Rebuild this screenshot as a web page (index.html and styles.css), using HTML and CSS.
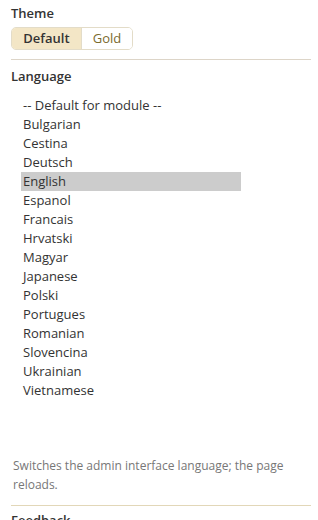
FILE: index.html
```html
<!DOCTYPE html>
<html lang="en">
<head>
    <meta charset="UTF-8">
    <meta name="viewport" content="width=device-width, initial-scale=1.0">
    <title>Settings</title>
    <link rel="stylesheet" href="styles.css">
</head>
<body>
    <div class="field">
        <div class="label">Theme</div>
        <div class="segmented">
            <button class="seg active">Default</button>
            <button class="seg">Gold</button>
        </div>
    </div>

    <div class="field field-top">
        <div class="label">Language</div>
        <div class="listbox" role="listbox">
            <div class="option">-- Default for module --</div>
            <div class="option">Bulgarian</div>
            <div class="option">Cestina</div>
            <div class="option">Deutsch</div>
            <div class="option selected">English</div>
            <div class="option">Espanol</div>
            <div class="option">Francais</div>
            <div class="option">Hrvatski</div>
            <div class="option">Magyar</div>
            <div class="option">Japanese</div>
            <div class="option">Polski</div>
            <div class="option">Portugues</div>
            <div class="option">Romanian</div>
            <div class="option">Slovencina</div>
            <div class="option">Ukrainian</div>
            <div class="option">Vietnamese</div>
        </div>
        <p class="help">Switches the admin interface language; the page reloads.</p>
    </div>

    <div class="field field-top field-gold">
        <div class="label">Feedback</div>
    </div>
</body>
</html>
```

FILE: styles.css
```css
body {
    margin: 0;
    padding: 4px 7px 0 11px;
    font-family: 'Open Sans', 'DejaVu Sans', sans-serif;
    font-size: 13px;
    color: #333;
    background: white;
}

.field-top {
    border-top: 1px solid #ddd5c8;
    margin-top: 9px;
    padding-top: 7px;
}

.field-gold {
    border-top-color: #e2d7b8;
    margin-top: 11px;
    padding-top: 5px;
}

.label {
    font-weight: 600;
    line-height: 18px;
}

.segmented {
    display: inline-flex;
    margin-top: 5px;
    border: 1px solid #e3dcc8;
    border-radius: 5px;
    overflow: hidden;
}

.seg {
    font-family: inherit;
    font-size: 13px;
    border: none;
    background: white;
    color: #7a6a2e;
    padding: 0;
    width: 51px;
    height: 21px;
    line-height: 21px;
    text-align: center;
    cursor: pointer;
}

.seg + .seg {
    border-left: 1px solid #e3dcc8;
}

.seg.active {
    background: #f3e6c6;
    color: #333;
    font-weight: 600;
    width: 69px;
}

.listbox {
    margin: 11px 0 0 10px;
    width: 220px;
    height: 350px;
}

.option {
    line-height: 19px;
    padding-left: 2px;
    white-space: nowrap;
}

.option.selected {
    background: #cccccc;
}

.help {
    margin: 10px 0 0 2px;
    font-size: 12px;
    line-height: 19px;
    color: #777;
}
```
